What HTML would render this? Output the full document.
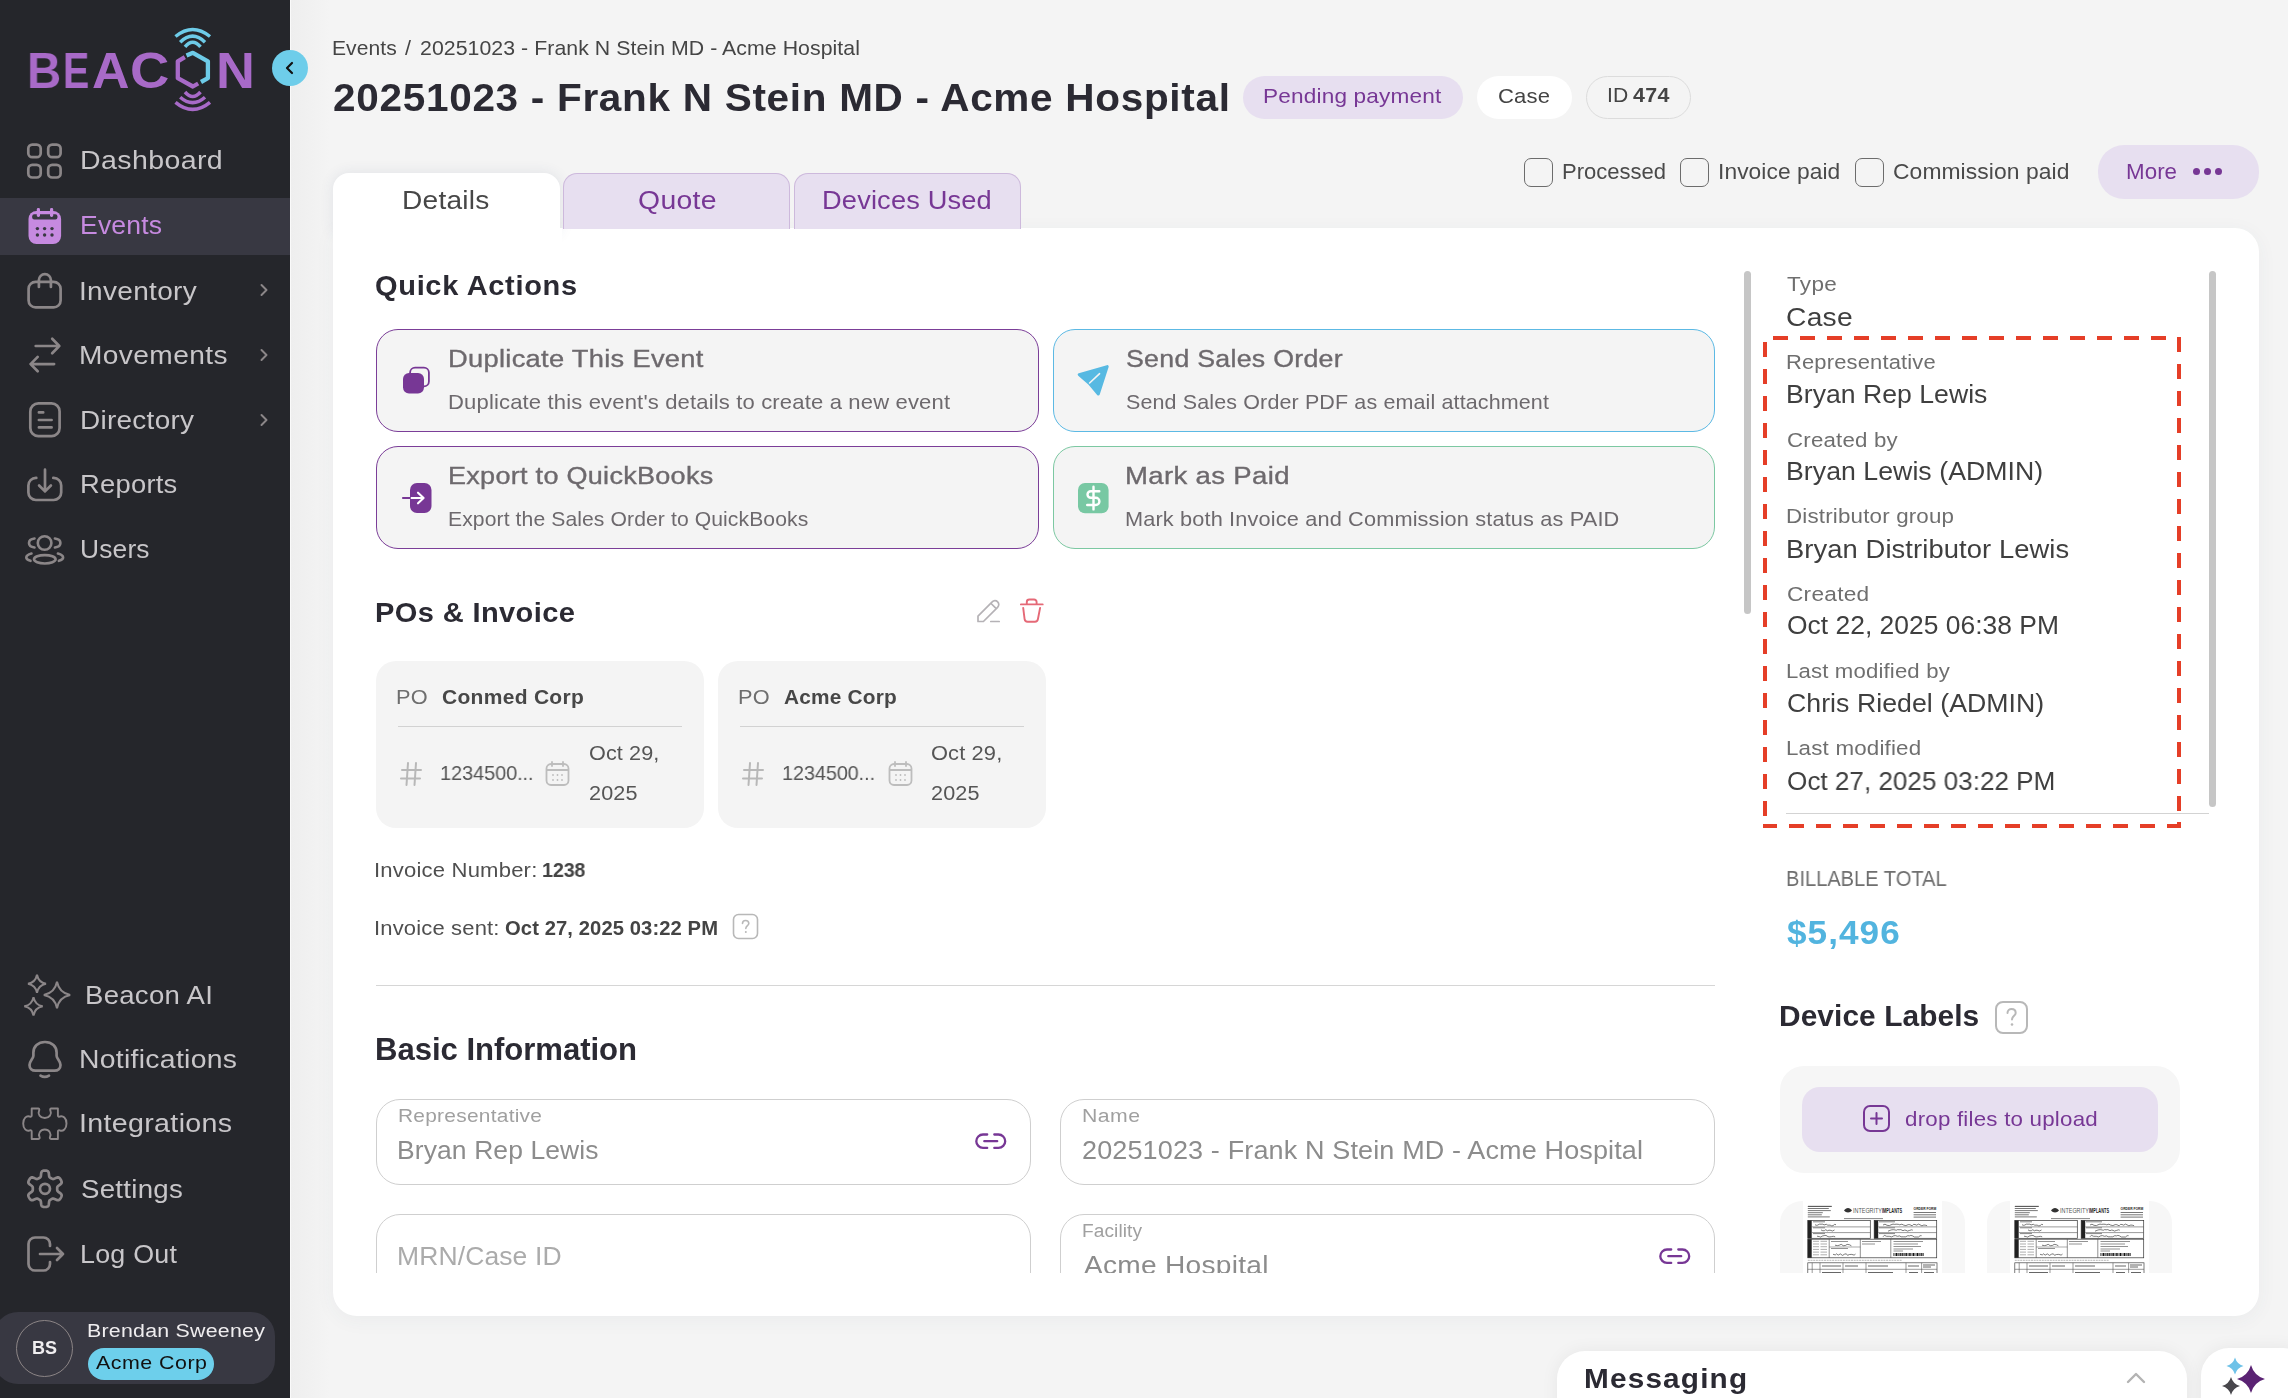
<!DOCTYPE html>
<html><head><meta charset="utf-8"><style>
html,body{margin:0;padding:0;width:2288px;height:1398px;overflow:hidden;background:#f4f4f4;font-family:"Liberation Sans",sans-serif;position:relative}
.t{position:absolute;white-space:nowrap;will-change:transform}
svg{overflow:visible}
</style></head><body>
<div id="root" style="position:absolute;left:0;top:0;width:2288px;height:1398px;overflow:hidden;background:#f4f4f4">
<div style="position:absolute;left:290px;top:0px;width:40px;height:1398px;background:linear-gradient(90deg,#eeeeee,#f4f4f4)"></div>
<div style="position:absolute;left:0px;top:0px;width:290px;height:1398px;background:#25262b"></div>
<div style="position:absolute;left:290px;top:0px;width:1px;height:1398px;background:#fafafa"></div>
<div style="position:absolute;left:0px;top:198px;width:290px;height:57px;background:#383842"></div>
<div class="t" style="left:26.7px;top:46.3px;font-size:50.27px;line-height:50.27px;letter-spacing:0.00px;color:#a86ac8;font-weight:700;transform:scaleX(0.9424);transform-origin:0 0;">B</div>
<div class="t" style="left:62.6px;top:46.3px;font-size:50.27px;line-height:50.27px;letter-spacing:0.00px;color:#a86ac8;font-weight:700;transform:scaleX(0.7851);transform-origin:0 0;">E</div>
<div class="t" style="left:92.1px;top:46.3px;font-size:50.27px;line-height:50.27px;letter-spacing:0.00px;color:#a86ac8;font-weight:700;transform:scaleX(1.0332);transform-origin:0 0;">A</div>
<div class="t" style="left:130.3px;top:46.3px;font-size:50.27px;line-height:50.27px;letter-spacing:0.00px;color:#a86ac8;font-weight:700;transform:scaleX(1.0842);transform-origin:0 0;">C</div>
<div class="t" style="left:215.5px;top:46.3px;font-size:50.27px;line-height:50.27px;letter-spacing:0.00px;color:#a86ac8;font-weight:700;transform:scaleX(1.0722);transform-origin:0 0;">N</div>
<svg style="position:absolute;left:165px;top:24px;" width="55" height="92" viewBox="0 0 55 92" fill="none">
      <path d="M21.5 31.5 L27.9 28.8 L42.9 37.3 L42.9 54.2 L36 58" stroke="#6dcbe8" stroke-width="4.3" stroke-linejoin="round"/>
      <path d="M19.8 33.2 L12.8 37.3 L12.8 54.2 L27.9 62.5 L33.2 59.5" stroke="#a86ac8" stroke-width="4.3" stroke-linejoin="round"/>
      <path d="M10.5 12.5 Q27.6 -1.5 45 12.5" stroke="#6dcbe8" stroke-width="3.5"/>
      <path d="M15.2 18.2 Q27.6 6 40 18.2" stroke="#6dcbe8" stroke-width="3.5"/>
      <path d="M20 22.8 Q27.6 13.6 35.5 22.8" stroke="#6dcbe8" stroke-width="3.5"/>
      <path d="M20 68 Q27.6 77 35.5 68" stroke="#a86ac8" stroke-width="3.5"/>
      <path d="M15.2 73.2 Q27.6 84 40 73.2" stroke="#a86ac8" stroke-width="3.5"/>
      <path d="M10.5 78.3 Q27.6 92.5 45 78.3" stroke="#a86ac8" stroke-width="3.5"/>
    </svg>
<div style="position:absolute;left:272px;top:50px;width:36px;height:36px;border-radius:50%;background:#6ecdea"></div>
<svg style="position:absolute;left:281px;top:59px;" width="18" height="18" viewBox="0 0 18 18" fill="none"><path d="M11 4 L6 9 L11 14" stroke="#111" stroke-width="2.2" stroke-linecap="round" stroke-linejoin="round"/></svg>
<div class="t" style="left:79.7px;top:147.9px;font-size:24.86px;line-height:24.86px;letter-spacing:0.36px;color:#c8c6c9;transform:scaleX(1.1460);transform-origin:0 0;">Dashboard</div>
<div class="t" style="left:79.9px;top:213.2px;font-size:24.86px;line-height:24.86px;letter-spacing:0.17px;color:#c68ae0;transform:scaleX(1.0682);transform-origin:0 0;">Events</div>
<div class="t" style="left:79.2px;top:278.6px;font-size:24.86px;line-height:24.86px;letter-spacing:0.27px;color:#c8c6c9;transform:scaleX(1.1274);transform-origin:0 0;">Inventory</div>
<div class="t" style="left:79.4px;top:343.4px;font-size:24.86px;line-height:24.86px;letter-spacing:0.35px;color:#c8c6c9;transform:scaleX(1.1311);transform-origin:0 0;">Movements</div>
<div class="t" style="left:79.5px;top:408.0px;font-size:24.86px;line-height:24.86px;letter-spacing:0.25px;color:#c8c6c9;transform:scaleX(1.1240);transform-origin:0 0;">Directory</div>
<div class="t" style="left:79.5px;top:472.1px;font-size:24.86px;line-height:24.86px;letter-spacing:0.24px;color:#c8c6c9;transform:scaleX(1.0995);transform-origin:0 0;">Reports</div>
<div class="t" style="left:79.7px;top:536.6px;font-size:24.86px;line-height:24.86px;letter-spacing:0.16px;color:#c8c6c9;transform:scaleX(1.0604);transform-origin:0 0;">Users</div>
<div class="t" style="left:84.8px;top:982.8px;font-size:24.86px;line-height:24.86px;letter-spacing:0.25px;color:#c8c6c9;transform:scaleX(1.1079);transform-origin:0 0;">Beacon AI</div>
<div class="t" style="left:79.4px;top:1046.6px;font-size:24.86px;line-height:24.86px;letter-spacing:0.26px;color:#c8c6c9;transform:scaleX(1.1405);transform-origin:0 0;">Notifications</div>
<div class="t" style="left:79.1px;top:1111.4px;font-size:24.86px;line-height:24.86px;letter-spacing:0.29px;color:#c8c6c9;transform:scaleX(1.1502);transform-origin:0 0;">Integrations</div>
<div class="t" style="left:80.5px;top:1176.6px;font-size:24.86px;line-height:24.86px;letter-spacing:0.24px;color:#c8c6c9;transform:scaleX(1.1121);transform-origin:0 0;">Settings</div>
<div class="t" style="left:79.6px;top:1241.9px;font-size:24.86px;line-height:24.86px;letter-spacing:0.20px;color:#c8c6c9;transform:scaleX(1.0804);transform-origin:0 0;">Log Out</div>
<svg style="position:absolute;left:25px;top:141px;" width="40" height="40" viewBox="0 0 40 40" fill="none"><rect x="3.3" y="3.6" width="12.4" height="12.6" rx="4" stroke="#8b8688" stroke-width="2.7" stroke-linecap="round" stroke-linejoin="round"/><rect x="23.2" y="3.6" width="12.4" height="12.6" rx="4" stroke="#8b8688" stroke-width="2.7" stroke-linecap="round" stroke-linejoin="round"/><rect x="3.3" y="23.9" width="12.4" height="12.6" rx="4" stroke="#8b8688" stroke-width="2.7" stroke-linecap="round" stroke-linejoin="round"/><rect x="23.2" y="23.9" width="12.4" height="12.6" rx="4" stroke="#8b8688" stroke-width="2.7" stroke-linecap="round" stroke-linejoin="round"/></svg>
<svg style="position:absolute;left:25px;top:205px;" width="40" height="42" viewBox="0 0 40 42" fill="none"><rect x="3.5" y="6" width="32.6" height="33" rx="8" fill="#c68ae0"/><rect x="7.2" y="9.2" width="25.2" height="5.4" rx="2" fill="#383842"/><rect x="11.8" y="3" width="3.2" height="9" rx="1.4" fill="#c68ae0"/><rect x="25" y="3" width="3.2" height="9" rx="1.4" fill="#c68ae0"/><circle cx="12.4" cy="23.6" r="1.7" fill="#383842"/><circle cx="12.4" cy="30" r="1.7" fill="#383842"/><circle cx="19.6" cy="23.6" r="1.7" fill="#383842"/><circle cx="19.6" cy="30" r="1.7" fill="#383842"/><circle cx="27" cy="23.6" r="1.7" fill="#383842"/><circle cx="27" cy="30" r="1.7" fill="#383842"/></svg>
<svg style="position:absolute;left:25px;top:270px;" width="40" height="42" viewBox="0 0 40 42" fill="none"><rect x="3.6" y="11.8" width="32" height="25.6" rx="7" stroke="#8b8688" stroke-width="2.7" stroke-linecap="round" stroke-linejoin="round"/><path d="M13.9 17 V10.1 a6 6 0 0 1 12 0 V17" stroke="#8b8688" stroke-width="2.7" stroke-linecap="round" stroke-linejoin="round"/></svg>
<svg style="position:absolute;left:25px;top:335px;" width="40" height="42" viewBox="0 0 40 42" fill="none"><path d="M10.7 11 H34.3 M27.2 3.8 L34.3 11 L27.2 18.2" stroke="#8b8688" stroke-width="2.7" stroke-linecap="round" stroke-linejoin="round"/><path d="M29.1 29.1 H5.6 M12.7 21.9 L5.6 29.1 L12.7 36.3" stroke="#8b8688" stroke-width="2.7" stroke-linecap="round" stroke-linejoin="round"/></svg>
<svg style="position:absolute;left:25px;top:400px;" width="40" height="42" viewBox="0 0 40 42" fill="none"><rect x="5.3" y="3.4" width="29.3" height="32.7" rx="8" stroke="#8b8688" stroke-width="2.7" stroke-linecap="round" stroke-linejoin="round"/><path d="M13.9 12.4 H18.2 M13.9 20 H26.6 M13.9 27.4 H26.6" stroke="#8b8688" stroke-width="2.7" stroke-linecap="round" stroke-linejoin="round"/></svg>
<svg style="position:absolute;left:25px;top:465px;" width="40" height="40" viewBox="0 0 40 40" fill="none"><path d="M11.3 12.9 H10.9 a7.5 7.5 0 0 0 -7.5 7.5 V27.5 a7.5 7.5 0 0 0 7.5 7.5 H28.7 a7.5 7.5 0 0 0 7.5 -7.5 V20.4 a7.5 7.5 0 0 0 -7.5 -7.5 H28.3" stroke="#8b8688" stroke-width="2.7" stroke-linecap="round" stroke-linejoin="round"/><path d="M20 4.7 V26.4 M14.1 20.5 L20 26.4 L25.9 20.5" stroke="#8b8688" stroke-width="2.7" stroke-linecap="round" stroke-linejoin="round"/></svg>
<svg style="position:absolute;left:23px;top:532px;" width="44" height="36" viewBox="0 0 44 36" fill="none"><circle cx="21.6" cy="11" r="6.8" stroke="#8b8688" stroke-width="2.6" stroke-linecap="round"/><ellipse cx="21.8" cy="27.3" rx="10.8" ry="4.2" stroke="#8b8688" stroke-width="2.6" stroke-linecap="round"/><path d="M11.5 6.5 C7.5 7 6 9 6 11 C6 13 7.5 15 11.5 15.5" stroke="#8b8688" stroke-width="2.6" stroke-linecap="round"/><path d="M31.9 6.5 C35.9 7 37.4 9 37.4 11 C37.4 13 35.9 15 31.9 15.5" stroke="#8b8688" stroke-width="2.6" stroke-linecap="round"/><path d="M8.5 21.5 C4.8 22.5 3.3 24 3.3 25.5 C3.3 27 4.5 28 7.5 28.8" stroke="#8b8688" stroke-width="2.6" stroke-linecap="round"/><path d="M34.9 21.5 C38.6 22.5 40.1 24 40.1 25.5 C40.1 27 38.9 28 35.9 28.8" stroke="#8b8688" stroke-width="2.6" stroke-linecap="round"/></svg>
<svg style="position:absolute;left:256px;top:282px;" width="16" height="16" viewBox="0 0 16 16" fill="none"><path d="M5.5 3 L10.5 8 L5.5 13" stroke="#8b8688" stroke-width="2" stroke-linecap="round" stroke-linejoin="round"/></svg>
<svg style="position:absolute;left:256px;top:347px;" width="16" height="16" viewBox="0 0 16 16" fill="none"><path d="M5.5 3 L10.5 8 L5.5 13" stroke="#8b8688" stroke-width="2" stroke-linecap="round" stroke-linejoin="round"/></svg>
<svg style="position:absolute;left:256px;top:412px;" width="16" height="16" viewBox="0 0 16 16" fill="none"><path d="M5.5 3 L10.5 8 L5.5 13" stroke="#8b8688" stroke-width="2" stroke-linecap="round" stroke-linejoin="round"/></svg>
<svg style="position:absolute;left:21px;top:972px;" width="52" height="48" viewBox="0 0 52 48" fill="none"><path d="M16 2.8000000000000007 Q17.44 10.360000000000001 25 11.8 Q17.44 13.24 16 20.8 Q14.56 13.24 7 11.8 Q14.56 10.360000000000001 16 2.8000000000000007 Z" stroke="#8b8688" stroke-width="2" stroke-linejoin="miter"/><path d="M36 9.8 Q38.112 20.887999999999998 49.2 23 Q38.112 25.112000000000002 36 36.2 Q33.888 25.112000000000002 22.8 23 Q33.888 20.887999999999998 36 9.8 Z" stroke="#8b8688" stroke-width="2" stroke-linejoin="miter"/><path d="M12.5 25.099999999999998 Q13.972 32.827999999999996 21.7 34.3 Q13.972 35.772 12.5 43.5 Q11.028 35.772 3.3000000000000007 34.3 Q11.028 32.827999999999996 12.5 25.099999999999998 Z" stroke="#8b8688" stroke-width="2" stroke-linejoin="miter"/></svg>
<svg style="position:absolute;left:25px;top:1038px;" width="40" height="44" viewBox="0 0 40 44" fill="none"><path d="M20 4 C27 4 31.6 8.5 31.6 14.5 V17.8 C31.6 20.5 35.5 23 35.5 27 C35.5 30.5 33 32.7 29.5 32.7 H10.5 C7 32.7 4.5 30.5 4.5 27 C4.5 23 8.4 20.5 8.4 17.8 V14.5 C8.4 8.5 13 4 20 4 Z" stroke="#8b8688" stroke-width="2.7" stroke-linecap="round" stroke-linejoin="round"/><path d="M15.5 37.6 Q19.7 40.2 24 37.6" stroke="#8b8688" stroke-width="2.7" stroke-linecap="round" stroke-linejoin="round"/></svg>
<svg style="position:absolute;left:21px;top:1106px;" width="48" height="36" viewBox="0 0 48 36" fill="none"><path d="M10.7 2.5 H17.5 C18.5 2.5 18.5 4 18 5 C16.5 8 19 12 23.8 12 C28.5 12 31 8 29.5 5 C29 4 29 2.5 30 2.5 H36.9 V9.5 C36.9 10.5 38 11 39 10.5 C42 9.5 45.5 12 45.5 17.5 C45.5 23 42 25.5 39 24.5 C38 24 36.9 24.5 36.9 25.5 V33 H30 C29 33 28.5 32 29 31 C30.5 28 28.5 23.5 23.8 23.5 C19 23.5 17 28 18.5 31 C19 32 18.5 33 17.5 33 H10.7 V25.5 C10.7 24.5 9.5 24 8.5 24.5 C5.5 25.5 2.2 23 2.2 17.5 C2.2 12 5.5 9.5 8.5 10.5 C9.5 11 10.7 10.5 10.7 9.5 Z" stroke="#8b8688" stroke-width="1.9" stroke-linejoin="round"/></svg>
<svg style="position:absolute;left:25px;top:1168px;" width="40" height="42" viewBox="0 0 40 42" fill="none"><path d="M20.00 2.60 L20.63 2.62 L21.27 2.68 L21.89 2.79 L22.50 3.01 L23.07 3.41 L23.54 4.15 L23.85 5.38 L24.00 6.86 L24.14 8.07 L24.36 8.83 L24.66 9.27 L25.00 9.57 L25.36 9.80 L25.73 10.02 L26.10 10.23 L26.47 10.45 L26.84 10.66 L27.23 10.85 L27.65 11.00 L28.19 11.04 L28.95 10.86 L30.08 10.37 L31.43 9.76 L32.65 9.41 L33.53 9.45 L34.16 9.74 L34.65 10.16 L35.06 10.64 L35.43 11.16 L35.76 11.70 L36.06 12.26 L36.33 12.84 L36.54 13.44 L36.66 14.07 L36.60 14.76 L36.19 15.54 L35.28 16.42 L34.07 17.29 L33.09 18.02 L32.55 18.59 L32.31 19.07 L32.23 19.51 L32.20 19.95 L32.20 20.37 L32.20 20.80 L32.20 21.23 L32.20 21.65 L32.23 22.09 L32.31 22.53 L32.55 23.01 L33.09 23.58 L34.07 24.31 L35.28 25.18 L36.19 26.06 L36.60 26.84 L36.66 27.53 L36.54 28.16 L36.33 28.76 L36.06 29.34 L35.76 29.90 L35.43 30.44 L35.06 30.96 L34.65 31.44 L34.16 31.86 L33.53 32.15 L32.65 32.19 L31.43 31.84 L30.08 31.23 L28.95 30.74 L28.19 30.56 L27.65 30.60 L27.23 30.75 L26.84 30.94 L26.47 31.15 L26.10 31.37 L25.73 31.58 L25.36 31.80 L25.00 32.03 L24.66 32.33 L24.36 32.77 L24.14 33.53 L24.00 34.74 L23.85 36.22 L23.54 37.45 L23.07 38.19 L22.50 38.59 L21.89 38.81 L21.27 38.92 L20.63 38.98 L20.00 39.00 L19.37 38.98 L18.73 38.92 L18.11 38.81 L17.50 38.59 L16.93 38.19 L16.46 37.45 L16.15 36.22 L16.00 34.74 L15.86 33.53 L15.64 32.77 L15.34 32.33 L15.00 32.03 L14.64 31.80 L14.27 31.58 L13.90 31.37 L13.53 31.15 L13.16 30.94 L12.77 30.75 L12.35 30.60 L11.81 30.56 L11.05 30.74 L9.92 31.23 L8.57 31.84 L7.35 32.19 L6.47 32.15 L5.84 31.86 L5.35 31.44 L4.94 30.96 L4.57 30.44 L4.24 29.90 L3.94 29.34 L3.67 28.76 L3.46 28.16 L3.34 27.53 L3.40 26.84 L3.81 26.06 L4.72 25.18 L5.93 24.31 L6.91 23.58 L7.45 23.01 L7.69 22.53 L7.77 22.09 L7.80 21.65 L7.80 21.23 L7.80 20.80 L7.80 20.37 L7.80 19.95 L7.77 19.51 L7.69 19.07 L7.45 18.59 L6.91 18.02 L5.93 17.29 L4.72 16.42 L3.81 15.54 L3.40 14.76 L3.34 14.07 L3.46 13.44 L3.67 12.84 L3.94 12.26 L4.24 11.70 L4.57 11.16 L4.94 10.64 L5.35 10.16 L5.84 9.74 L6.47 9.45 L7.35 9.41 L8.57 9.76 L9.92 10.37 L11.05 10.86 L11.81 11.04 L12.35 11.00 L12.77 10.85 L13.16 10.66 L13.53 10.45 L13.90 10.23 L14.27 10.02 L14.64 9.80 L15.00 9.57 L15.34 9.27 L15.64 8.83 L15.86 8.07 L16.00 6.86 L16.15 5.38 L16.46 4.15 L16.93 3.41 L17.50 3.01 L18.11 2.79 L18.73 2.68 L19.37 2.62 L20.00 2.60Z" stroke="#8b8688" stroke-width="2.7" stroke-linecap="round" stroke-linejoin="round"/><circle cx="20" cy="20.8" r="5" stroke="#8b8688" stroke-width="2.7" stroke-linecap="round" stroke-linejoin="round"/></svg>
<svg style="position:absolute;left:25px;top:1234px;" width="42" height="40" viewBox="0 0 42 40" fill="none"><path d="M25 12 V10 a6.5 6.5 0 0 0 -6.5 -6.5 H10 a6.5 6.5 0 0 0 -6.5 6.5 V30 a6.5 6.5 0 0 0 6.5 6.5 H18.5 a6.5 6.5 0 0 0 6.5 -6.5 V28" stroke="#8b8688" stroke-width="2.7" stroke-linecap="round" stroke-linejoin="round"/><path d="M15 20 H38 M32 14 L38 20 L32 26" stroke="#8b8688" stroke-width="2.7" stroke-linecap="round" stroke-linejoin="round"/></svg>
<div style="position:absolute;left:-6px;top:1312px;width:281px;height:72px;border-radius:24px;background:#383842"></div>
<div style="position:absolute;left:15.5px;top:1319.5px;width:57px;height:57px;border-radius:50%;border:1px solid #8c8586;box-sizing:border-box"></div>
<div class="t" style="left:32.0px;top:1340.1px;font-size:17.97px;line-height:17.97px;letter-spacing:0.05px;color:#f0eef0;font-weight:700;transform:scaleX(1.0023);transform-origin:0 0;">BS</div>
<div class="t" style="left:87.0px;top:1321.3px;font-size:19.19px;line-height:19.19px;letter-spacing:0.21px;color:#efedef;transform:scaleX(1.1137);transform-origin:0 0;">Brendan Sweeney</div>
<div style="position:absolute;left:88px;top:1348px;width:126px;height:32px;border-radius:16px;background:#6dcfeb"></div>
<div class="t" style="left:96.2px;top:1355.0px;font-size:17.43px;line-height:17.43px;letter-spacing:0.40px;color:#111;transform:scaleX(1.2281);transform-origin:0 0;">Acme Corp</div>
<div class="t" style="left:331.5px;top:37.7px;font-size:20.54px;line-height:20.54px;letter-spacing:0.06px;color:#454545;transform:scaleX(1.0268);transform-origin:0 0;">Events</div>
<div class="t" style="left:405.0px;top:37.7px;font-size:20.54px;line-height:20.54px;letter-spacing:0.00px;color:#454545;transform:scaleX(1.0526);transform-origin:0 0;">/</div>
<div class="t" style="left:419.8px;top:37.7px;font-size:20.54px;line-height:20.54px;letter-spacing:0.06px;color:#454545;transform:scaleX(1.0358);transform-origin:0 0;">20251023 - Frank N Stein MD - Acme Hospital</div>
<div class="t" style="left:332.6px;top:77.6px;font-size:39.19px;line-height:39.19px;letter-spacing:0.68px;color:#2b2a33;font-weight:700;transform:scaleX(1.0341);transform-origin:0 0;">20251023 - Frank N Stein MD - Acme Hospital</div>
<div style="position:absolute;left:1243px;top:76px;width:220px;height:43px;border-radius:22px;background:#e7dff0"></div>
<div class="t" style="left:1262.9px;top:86.0px;font-size:20.95px;line-height:20.95px;letter-spacing:0.16px;color:#773795;transform:scaleX(1.0792);transform-origin:0 0;">Pending payment</div>
<div style="position:absolute;left:1477px;top:76px;width:95px;height:43px;border-radius:22px;background:#fff"></div>
<div class="t" style="left:1498.2px;top:86.0px;font-size:20.95px;line-height:20.95px;letter-spacing:0.15px;color:#444;transform:scaleX(1.0538);transform-origin:0 0;">Case</div>
<div style="position:absolute;left:1586px;top:76px;width:105px;height:43px;border-radius:22px;border:1px solid #dcdcdc;box-sizing:border-box"></div>
<div class="t" style="left:1606.8px;top:85.0px;font-size:20.95px;line-height:20.95px;letter-spacing:0.03px;color:#444;transform:scaleX(1.0085);transform-origin:0 0;">ID</div>
<div class="t" style="left:1633.0px;top:85.0px;font-size:20.95px;line-height:20.95px;letter-spacing:0.38px;color:#444;font-weight:700;transform:scaleX(1.0222);transform-origin:0 0;">474</div>
<div style="position:absolute;left:1524px;top:158px;width:29px;height:29px;border-radius:7px;border:1.2px solid #6c6c6c;box-sizing:border-box"></div>
<div class="t" style="left:1561.9px;top:161.4px;font-size:22.03px;line-height:22.03px;letter-spacing:0.00px;color:#4a4a4a;transform:scaleX(1.0001);transform-origin:0 0;">Processed</div>
<div style="position:absolute;left:1680px;top:158px;width:29px;height:29px;border-radius:7px;border:1.2px solid #6c6c6c;box-sizing:border-box"></div>
<div class="t" style="left:1718.3px;top:161.4px;font-size:22.03px;line-height:22.03px;letter-spacing:0.06px;color:#4a4a4a;transform:scaleX(1.0349);transform-origin:0 0;">Invoice paid</div>
<div style="position:absolute;left:1855px;top:158px;width:29px;height:29px;border-radius:7px;border:1.2px solid #6c6c6c;box-sizing:border-box"></div>
<div class="t" style="left:1893.2px;top:161.4px;font-size:22.03px;line-height:22.03px;letter-spacing:0.08px;color:#4a4a4a;transform:scaleX(1.0381);transform-origin:0 0;">Commission paid</div>
<div style="position:absolute;left:2098px;top:145px;width:161px;height:54px;border-radius:26px;background:#e7dff0"></div>
<div class="t" style="left:2125.6px;top:161.4px;font-size:22.03px;line-height:22.03px;letter-spacing:0.04px;color:#773795;transform:scaleX(1.0151);transform-origin:0 0;">More</div>
<div style="position:absolute;left:2192.7px;top:167.5px;width:7.6px;height:7.6px;border-radius:50%;background:#773795"></div>
<div style="position:absolute;left:2203.7px;top:167.5px;width:7.6px;height:7.6px;border-radius:50%;background:#773795"></div>
<div style="position:absolute;left:2214.7px;top:167.5px;width:7.6px;height:7.6px;border-radius:50%;background:#773795"></div>
<div style="position:absolute;left:333px;top:228px;width:1926px;height:1088px;border-radius:0 24px 24px 24px;background:#fff;box-shadow:0 4px 20px rgba(60,70,90,0.05)"></div>
<div style="position:absolute;left:333px;top:173px;width:227px;height:60px;border-radius:16px 16px 0 0;background:#fff;box-shadow:0 0 14px rgba(50,70,110,0.10)"></div>
<div style="position:absolute;left:333px;top:228px;width:229px;height:34px;background:#fff"></div>
<div class="t" style="left:402.1px;top:187.9px;font-size:25.68px;line-height:25.68px;letter-spacing:0.20px;color:#474747;transform:scaleX(1.0951);transform-origin:0 0;">Details</div>
<div style="position:absolute;left:563px;top:173px;width:227px;height:56px;border-radius:14px 14px 0 0;background:#e7dff0;border:1px solid #cdb9dc;border-bottom:none;box-sizing:border-box"></div>
<div class="t" style="left:637.5px;top:187.9px;font-size:25.68px;line-height:25.68px;letter-spacing:0.30px;color:#773795;transform:scaleX(1.1051);transform-origin:0 0;">Quote</div>
<div style="position:absolute;left:794px;top:173px;width:227px;height:56px;border-radius:14px 14px 0 0;background:#e7dff0;border:1px solid #cdb9dc;border-bottom:none;box-sizing:border-box"></div>
<div class="t" style="left:822.2px;top:187.9px;font-size:25.68px;line-height:25.68px;letter-spacing:0.15px;color:#773795;transform:scaleX(1.0607);transform-origin:0 0;">Devices Used</div>
<div class="t" style="left:375.4px;top:272.1px;font-size:27.84px;line-height:27.84px;letter-spacing:0.65px;color:#2b2a33;font-weight:700;transform:scaleX(1.0422);transform-origin:0 0;">Quick Actions</div>
<div style="position:absolute;left:376px;top:329px;width:663px;height:103px;border-radius:22px;background:#f4f4f4;border:1.5px solid #7b3e98;box-sizing:border-box"></div>
<div class="t" style="left:447.8px;top:346.5px;font-size:24.05px;line-height:24.05px;letter-spacing:0.26px;color:#6d696d;transform:scaleX(1.1347);transform-origin:0 0;-webkit-text-stroke:0.35px #6d696d;">Duplicate This Event</div>
<div class="t" style="left:448.2px;top:392.4px;font-size:20.14px;line-height:20.14px;letter-spacing:0.14px;color:#6d696d;transform:scaleX(1.0950);transform-origin:0 0;">Duplicate this event&#x27;s details to create a new event</div>
<div style="position:absolute;left:1053px;top:329px;width:662px;height:103px;border-radius:22px;background:#f4f4f4;border:1.5px solid #5cb9e4;box-sizing:border-box"></div>
<div class="t" style="left:1125.8px;top:346.5px;font-size:24.05px;line-height:24.05px;letter-spacing:0.24px;color:#6d696d;transform:scaleX(1.1125);transform-origin:0 0;-webkit-text-stroke:0.35px #6d696d;">Send Sales Order</div>
<div class="t" style="left:1126.0px;top:392.4px;font-size:20.14px;line-height:20.14px;letter-spacing:0.12px;color:#6d696d;transform:scaleX(1.0675);transform-origin:0 0;">Send Sales Order PDF as email attachment</div>
<div style="position:absolute;left:376px;top:446px;width:663px;height:103px;border-radius:22px;background:#f4f4f4;border:1.5px solid #7b3e98;box-sizing:border-box"></div>
<div class="t" style="left:447.8px;top:463.5px;font-size:24.05px;line-height:24.05px;letter-spacing:0.25px;color:#6d696d;transform:scaleX(1.1240);transform-origin:0 0;-webkit-text-stroke:0.35px #6d696d;">Export to QuickBooks</div>
<div class="t" style="left:448.3px;top:509.4px;font-size:20.14px;line-height:20.14px;letter-spacing:0.08px;color:#6d696d;transform:scaleX(1.0509);transform-origin:0 0;">Export the Sales Order to QuickBooks</div>
<div style="position:absolute;left:1053px;top:446px;width:662px;height:103px;border-radius:22px;background:#f4f4f4;border:1.5px solid #7cc8a2;box-sizing:border-box"></div>
<div class="t" style="left:1124.8px;top:463.5px;font-size:24.05px;line-height:24.05px;letter-spacing:0.30px;color:#6d696d;transform:scaleX(1.1456);transform-origin:0 0;-webkit-text-stroke:0.35px #6d696d;">Mark as Paid</div>
<div class="t" style="left:1125.3px;top:509.4px;font-size:20.14px;line-height:20.14px;letter-spacing:0.13px;color:#6d696d;transform:scaleX(1.0804);transform-origin:0 0;">Mark both Invoice and Commission status as PAID</div>
<svg style="position:absolute;left:400px;top:364px;" width="34" height="34" viewBox="0 0 34 34" fill="none"><rect x="10.1" y="3.6" width="18.8" height="18.8" rx="5" stroke="#773795" stroke-width="1.8"/><rect x="3" y="8.9" width="21" height="20.7" rx="6" fill="#773795"/></svg>
<svg style="position:absolute;left:400px;top:480px;" width="34" height="36" viewBox="0 0 34 36" fill="none"><rect x="10" y="2.9" width="21.5" height="30.1" rx="7" fill="#773795"/><path d="M10 18 H23.6 M18 12.7 L23.6 18 L18 23.3" stroke="#fff" stroke-width="2.1" stroke-linecap="round" stroke-linejoin="round"/><path d="M3 18 H10" stroke="#773795" stroke-width="2.1" stroke-linecap="round"/></svg>
<svg style="position:absolute;left:1076px;top:363px;" width="36" height="36" viewBox="0 0 36 36" fill="none"><path d="M3.2 11.6 L31.2 3.6 L22.3 31 L13.3 20.3 Z" fill="#57b9e2" stroke="#57b9e2" stroke-width="3" stroke-linejoin="round"/><path d="M13.6 20 L23.6 10.7" stroke="#f4f4f4" stroke-width="1.6" stroke-linecap="round"/></svg>
<svg style="position:absolute;left:1077px;top:482px;" width="34" height="34" viewBox="0 0 34 34" fill="none"><rect x="1" y="1" width="30.6" height="30.2" rx="7" fill="#78c8a3"/><path d="M22.3 9.2 H13.8 a3.3 3.3 0 0 0 0 6.6 H18.8 a3.6 3.6 0 0 1 0 7.2 H10.2 M16.5 4.7 V27.4" stroke="#fff" stroke-width="2.4" stroke-linecap="round"/></svg>
<div style="position:absolute;left:1744px;top:271px;width:7px;height:343px;border-radius:4px;background:#c6c6c6"></div>
<div style="position:absolute;left:2209px;top:271px;width:7px;height:536px;border-radius:4px;background:#c6c6c6"></div>
<div class="t" style="left:374.5px;top:598.3px;font-size:28.38px;line-height:28.38px;letter-spacing:0.37px;color:#2b2a33;font-weight:700;transform:scaleX(1.0234);transform-origin:0 0;">POs &amp; Invoice</div>
<svg style="position:absolute;left:972px;top:596px;" width="32" height="32" viewBox="0 0 32 32" fill="none"><path d="M6.00 25.50 H11.40 L25.58 11.32 A3.82 3.82 0 1 0 20.18 5.92 L6.00 20.10 Z M18.83 7.27 L24.23 12.67 M18.8 25.5 H27.2" stroke="#b5b2b6" stroke-width="1.7" stroke-linecap="round" stroke-linejoin="round"/></svg>
<svg style="position:absolute;left:1016px;top:596px;" width="30" height="30" viewBox="0 0 30 30" fill="none"><path d="M4.9 8.4 H26.7 M10.8 8.4 V6 a2.5 2.5 0 0 1 2.5 -2.5 H18.1 a2.5 2.5 0 0 1 2.5 2.5 V8.4 M7.2 11.9 L8.6 23.2 a3 3 0 0 0 3 2.6 H18.9 a3 3 0 0 0 3 -2.6 L24.1 11.9" stroke="#e56977" stroke-width="1.9" stroke-linecap="round" stroke-linejoin="round"/></svg>
<div style="position:absolute;left:376px;top:661px;width:328px;height:167px;border-radius:20px;background:#f4f4f4"></div>
<div class="t" style="left:396.1px;top:687.4px;font-size:20.54px;line-height:20.54px;letter-spacing:0.28px;color:#6e6e6e;transform:scaleX(1.0591);transform-origin:0 0;">PO</div>
<div class="t" style="left:441.6px;top:687.4px;font-size:20.54px;line-height:20.54px;letter-spacing:0.30px;color:#474747;font-weight:700;transform:scaleX(1.0220);transform-origin:0 0;">Conmed Corp</div>
<div style="position:absolute;left:398px;top:726px;width:284px;height:1px;background:#d2d2d2"></div>
<svg style="position:absolute;left:399px;top:760px;" width="24" height="28" viewBox="0 0 24 28" fill="none"><path d="M9 3 L7.5 25 M17 3 L15.5 25 M3 10 H22 M2 18.5 H21" stroke="#b8b8b8" stroke-width="2" stroke-linecap="round"/></svg>
<div class="t" style="left:439.7px;top:762.5px;font-size:20.81px;line-height:20.81px;letter-spacing:-0.08px;color:#555;transform:scaleX(0.9587);transform-origin:0 0;">1234500...</div>
<svg style="position:absolute;left:544px;top:760px;" width="28" height="28" viewBox="0 0 28 28" fill="none"><rect x="2.5" y="4" width="22" height="21" rx="4.5" stroke="#bdbdbd" stroke-width="1.8"/><path d="M8 2 V6 M19 2 V6 M3 10 H24" stroke="#bdbdbd" stroke-width="1.8" stroke-linecap="round"/><circle cx="9" cy="15" r="0.9" fill="#bdbdbd"/><circle cx="9" cy="20" r="0.9" fill="#bdbdbd"/><circle cx="13.5" cy="15" r="0.9" fill="#bdbdbd"/><circle cx="13.5" cy="20" r="0.9" fill="#bdbdbd"/><circle cx="18" cy="15" r="0.9" fill="#bdbdbd"/><circle cx="18" cy="20" r="0.9" fill="#bdbdbd"/></svg>
<div class="t" style="left:589.3px;top:743.2px;font-size:20.54px;line-height:20.54px;letter-spacing:0.10px;color:#555;transform:scaleX(1.0524);transform-origin:0 0;">Oct 29,</div>
<div class="t" style="left:589.2px;top:782.5px;font-size:20.54px;line-height:20.54px;letter-spacing:0.13px;color:#555;transform:scaleX(1.0530);transform-origin:0 0;">2025</div>
<div style="position:absolute;left:718px;top:661px;width:328px;height:167px;border-radius:20px;background:#f4f4f4"></div>
<div class="t" style="left:738.1px;top:687.4px;font-size:20.54px;line-height:20.54px;letter-spacing:0.28px;color:#6e6e6e;transform:scaleX(1.0591);transform-origin:0 0;">PO</div>
<div class="t" style="left:783.9px;top:687.4px;font-size:20.54px;line-height:20.54px;letter-spacing:0.20px;color:#474747;font-weight:700;transform:scaleX(1.0149);transform-origin:0 0;">Acme Corp</div>
<div style="position:absolute;left:740px;top:726px;width:284px;height:1px;background:#d2d2d2"></div>
<svg style="position:absolute;left:741px;top:760px;" width="24" height="28" viewBox="0 0 24 28" fill="none"><path d="M9 3 L7.5 25 M17 3 L15.5 25 M3 10 H22 M2 18.5 H21" stroke="#b8b8b8" stroke-width="2" stroke-linecap="round"/></svg>
<div class="t" style="left:781.7px;top:762.5px;font-size:20.81px;line-height:20.81px;letter-spacing:-0.09px;color:#555;transform:scaleX(0.9542);transform-origin:0 0;">1234500...</div>
<svg style="position:absolute;left:887px;top:760px;" width="28" height="28" viewBox="0 0 28 28" fill="none"><rect x="2.5" y="4" width="22" height="21" rx="4.5" stroke="#bdbdbd" stroke-width="1.8"/><path d="M8 2 V6 M19 2 V6 M3 10 H24" stroke="#bdbdbd" stroke-width="1.8" stroke-linecap="round"/><circle cx="9" cy="15" r="0.9" fill="#bdbdbd"/><circle cx="9" cy="20" r="0.9" fill="#bdbdbd"/><circle cx="13.5" cy="15" r="0.9" fill="#bdbdbd"/><circle cx="13.5" cy="20" r="0.9" fill="#bdbdbd"/><circle cx="18" cy="15" r="0.9" fill="#bdbdbd"/><circle cx="18" cy="20" r="0.9" fill="#bdbdbd"/></svg>
<div class="t" style="left:931.0px;top:743.2px;font-size:20.54px;line-height:20.54px;letter-spacing:0.12px;color:#555;transform:scaleX(1.0643);transform-origin:0 0;">Oct 29,</div>
<div class="t" style="left:930.9px;top:782.5px;font-size:20.54px;line-height:20.54px;letter-spacing:0.13px;color:#555;transform:scaleX(1.0530);transform-origin:0 0;">2025</div>
<div class="t" style="left:374.4px;top:860.4px;font-size:20.00px;line-height:20.00px;letter-spacing:0.18px;color:#4f4f4f;transform:scaleX(1.1021);transform-origin:0 0;">Invoice Number:</div>
<div class="t" style="left:542.1px;top:860.4px;font-size:20.00px;line-height:20.00px;letter-spacing:-0.17px;color:#444;font-weight:700;transform:scaleX(0.9882);transform-origin:0 0;">1238</div>
<div class="t" style="left:374.4px;top:917.6px;font-size:20.00px;line-height:20.00px;letter-spacing:0.15px;color:#4f4f4f;transform:scaleX(1.0993);transform-origin:0 0;">Invoice sent:</div>
<div class="t" style="left:504.9px;top:917.6px;font-size:20.00px;line-height:20.00px;letter-spacing:0.10px;color:#444;font-weight:700;transform:scaleX(1.0094);transform-origin:0 0;">Oct 27, 2025 03:22 PM</div>
<svg style="position:absolute;left:732px;top:913px;" width="28" height="28" viewBox="0 0 28 28" fill="none"><rect x="1.5" y="1.5" width="24" height="24" rx="5" stroke="#b8b8b8" stroke-width="1.6"/><path d="M10.5 10.5 C10.5 8.5 12 7.5 13.5 7.5 C15.5 7.5 16.8 8.8 16.8 10.5 C16.8 12.5 13.8 13 13.8 15.5" stroke="#b8b8b8" stroke-width="1.6" stroke-linecap="round"/><circle cx="13.8" cy="19" r="1" fill="#b8b8b8"/></svg>
<div style="position:absolute;left:376px;top:985px;width:1339px;height:1px;background:#d6d6d6"></div>
<div class="t" style="left:374.8px;top:1034.2px;font-size:31.08px;line-height:31.08px;letter-spacing:-0.03px;color:#2b2a33;font-weight:700;transform:scaleX(0.9981);transform-origin:0 0;">Basic Information</div>
<div style="position:absolute;left:333px;top:1090px;width:1410px;height:183px;overflow:hidden">
<div style="position:absolute;left:43px;top:9px;width:655px;height:86px;border-radius:24px;border:1.2px solid #cfcfcf;box-sizing:border-box;background:#fff"></div>
<div style="position:absolute;left:727px;top:9px;width:655px;height:86px;border-radius:24px;border:1.2px solid #cfcfcf;box-sizing:border-box;background:#fff"></div>
<div style="position:absolute;left:43px;top:124px;width:655px;height:86px;border-radius:24px;border:1.2px solid #cfcfcf;box-sizing:border-box;background:#fff"></div>
<div style="position:absolute;left:727px;top:124px;width:655px;height:86px;border-radius:24px;border:1.2px solid #cfcfcf;box-sizing:border-box;background:#fff"></div>
<div class="t" style="left:64.5px;top:17.4px;font-size:18.24px;line-height:18.24px;letter-spacing:0.23px;color:#a0a0a0;transform:scaleX(1.1457);transform-origin:0 0;">Representative</div>
<div class="t" style="left:64.1px;top:48.0px;font-size:25.41px;line-height:25.41px;letter-spacing:0.10px;color:#8c8c8c;transform:scaleX(1.0419);transform-origin:0 0;">Bryan Rep Lewis</div>
<div class="t" style="left:748.9px;top:17.4px;font-size:18.24px;line-height:18.24px;letter-spacing:0.42px;color:#a0a0a0;transform:scaleX(1.1640);transform-origin:0 0;">Name</div>
<div class="t" style="left:749.3px;top:48.0px;font-size:25.41px;line-height:25.41px;letter-spacing:0.13px;color:#8c8c8c;transform:scaleX(1.0627);transform-origin:0 0;">20251023 - Frank N Stein MD - Acme Hospital</div>
<div class="t" style="left:64.1px;top:154.4px;font-size:25.41px;line-height:25.41px;letter-spacing:0.11px;color:#ababab;transform:scaleX(1.0428);transform-origin:0 0;">MRN/Case ID</div>
<div class="t" style="left:749.1px;top:132.4px;font-size:18.24px;line-height:18.24px;letter-spacing:0.07px;color:#a0a0a0;transform:scaleX(1.0493);transform-origin:0 0;">Facility</div>
<div class="t" style="left:750.5px;top:163.0px;font-size:25.41px;line-height:25.41px;letter-spacing:0.24px;color:#8c8c8c;transform:scaleX(1.1063);transform-origin:0 0;">Acme Hospital</div>
<svg style="position:absolute;left:641px;top:41px;" width="32" height="20" viewBox="0 0 32 20" fill="none"><path d="M13.2 3.5 H9 a6.7 6.7 0 0 0 0 13.4 H13.2 M20.3 3.5 H24.5 a6.7 6.7 0 0 1 0 13.4 H20.3 M10.3 10.2 H23.2" stroke="#773795" stroke-width="2.3" stroke-linecap="round"/></svg>
<svg style="position:absolute;left:1325px;top:156px;" width="32" height="20" viewBox="0 0 32 20" fill="none"><path d="M13.2 3.5 H9 a6.7 6.7 0 0 0 0 13.4 H13.2 M20.3 3.5 H24.5 a6.7 6.7 0 0 1 0 13.4 H20.3 M10.3 10.2 H23.2" stroke="#773795" stroke-width="2.3" stroke-linecap="round"/></svg>
</div>
<div class="t" style="left:1787.3px;top:274.4px;font-size:20.27px;line-height:20.27px;letter-spacing:0.27px;color:#6f6f6f;transform:scaleX(1.1114);transform-origin:0 0;">Type</div>
<div class="t" style="left:1786.4px;top:303.8px;font-size:26.22px;line-height:26.22px;letter-spacing:0.25px;color:#3f3f3f;transform:scaleX(1.0759);transform-origin:0 0;">Case</div>
<div class="t" style="left:1786.0px;top:351.7px;font-size:20.27px;line-height:20.27px;letter-spacing:0.15px;color:#6f6f6f;transform:scaleX(1.0827);transform-origin:0 0;">Representative</div>
<div class="t" style="left:1785.7px;top:381.1px;font-size:26.22px;line-height:26.22px;letter-spacing:0.03px;color:#3f3f3f;transform:scaleX(1.0140);transform-origin:0 0;">Bryan Rep Lewis</div>
<div class="t" style="left:1786.7px;top:429.9px;font-size:20.27px;line-height:20.27px;letter-spacing:0.18px;color:#6f6f6f;transform:scaleX(1.0988);transform-origin:0 0;">Created by</div>
<div class="t" style="left:1785.7px;top:457.5px;font-size:26.22px;line-height:26.22px;letter-spacing:0.04px;color:#3f3f3f;transform:scaleX(1.0175);transform-origin:0 0;">Bryan Lewis (ADMIN)</div>
<div class="t" style="left:1786.0px;top:506.3px;font-size:20.27px;line-height:20.27px;letter-spacing:0.16px;color:#6f6f6f;transform:scaleX(1.1025);transform-origin:0 0;">Distributor group</div>
<div class="t" style="left:1785.6px;top:535.6px;font-size:26.22px;line-height:26.22px;letter-spacing:0.09px;color:#3f3f3f;transform:scaleX(1.0429);transform-origin:0 0;">Bryan Distributor Lewis</div>
<div class="t" style="left:1786.7px;top:583.6px;font-size:20.27px;line-height:20.27px;letter-spacing:0.23px;color:#6f6f6f;transform:scaleX(1.1179);transform-origin:0 0;">Created</div>
<div class="t" style="left:1786.6px;top:612.1px;font-size:26.22px;line-height:26.22px;letter-spacing:0.02px;color:#3f3f3f;transform:scaleX(1.0069);transform-origin:0 0;">Oct 22, 2025 06:38 PM</div>
<div class="t" style="left:1786.0px;top:660.9px;font-size:20.27px;line-height:20.27px;letter-spacing:0.15px;color:#6f6f6f;transform:scaleX(1.0928);transform-origin:0 0;">Last modified by</div>
<div class="t" style="left:1786.5px;top:690.2px;font-size:26.22px;line-height:26.22px;letter-spacing:0.04px;color:#3f3f3f;transform:scaleX(1.0175);transform-origin:0 0;">Chris Riedel (ADMIN)</div>
<div class="t" style="left:1786.0px;top:738.1px;font-size:20.27px;line-height:20.27px;letter-spacing:0.17px;color:#6f6f6f;transform:scaleX(1.1027);transform-origin:0 0;">Last modified</div>
<div class="t" style="left:1786.6px;top:767.5px;font-size:26.22px;line-height:26.22px;letter-spacing:-0.01px;color:#3f3f3f;transform:scaleX(0.9961);transform-origin:0 0;">Oct 27, 2025 03:22 PM</div>
<div style="position:absolute;left:1786px;top:813px;width:423px;height:1px;background:#d3d3d3"></div>
<div style="position:absolute;left:1773px;top:336px;width:15px;height:4px;background:#e53e27"></div>
<div style="position:absolute;left:1800px;top:336px;width:15px;height:4px;background:#e53e27"></div>
<div style="position:absolute;left:1827px;top:336px;width:15px;height:4px;background:#e53e27"></div>
<div style="position:absolute;left:1854px;top:336px;width:15px;height:4px;background:#e53e27"></div>
<div style="position:absolute;left:1881px;top:336px;width:15px;height:4px;background:#e53e27"></div>
<div style="position:absolute;left:1908px;top:336px;width:15px;height:4px;background:#e53e27"></div>
<div style="position:absolute;left:1935px;top:336px;width:15px;height:4px;background:#e53e27"></div>
<div style="position:absolute;left:1962px;top:336px;width:15px;height:4px;background:#e53e27"></div>
<div style="position:absolute;left:1989px;top:336px;width:15px;height:4px;background:#e53e27"></div>
<div style="position:absolute;left:2016px;top:336px;width:15px;height:4px;background:#e53e27"></div>
<div style="position:absolute;left:2043px;top:336px;width:15px;height:4px;background:#e53e27"></div>
<div style="position:absolute;left:2070px;top:336px;width:15px;height:4px;background:#e53e27"></div>
<div style="position:absolute;left:2097px;top:336px;width:15px;height:4px;background:#e53e27"></div>
<div style="position:absolute;left:2124px;top:336px;width:15px;height:4px;background:#e53e27"></div>
<div style="position:absolute;left:2151px;top:336px;width:15px;height:4px;background:#e53e27"></div>
<div style="position:absolute;left:1763px;top:342px;width:4px;height:15px;background:#e53e27"></div>
<div style="position:absolute;left:1763px;top:369px;width:4px;height:15px;background:#e53e27"></div>
<div style="position:absolute;left:1763px;top:396px;width:4px;height:15px;background:#e53e27"></div>
<div style="position:absolute;left:1763px;top:423px;width:4px;height:15px;background:#e53e27"></div>
<div style="position:absolute;left:1763px;top:450px;width:4px;height:15px;background:#e53e27"></div>
<div style="position:absolute;left:1763px;top:477px;width:4px;height:15px;background:#e53e27"></div>
<div style="position:absolute;left:1763px;top:504px;width:4px;height:15px;background:#e53e27"></div>
<div style="position:absolute;left:1763px;top:531px;width:4px;height:15px;background:#e53e27"></div>
<div style="position:absolute;left:1763px;top:558px;width:4px;height:15px;background:#e53e27"></div>
<div style="position:absolute;left:1763px;top:585px;width:4px;height:15px;background:#e53e27"></div>
<div style="position:absolute;left:1763px;top:612px;width:4px;height:15px;background:#e53e27"></div>
<div style="position:absolute;left:1763px;top:639px;width:4px;height:15px;background:#e53e27"></div>
<div style="position:absolute;left:1763px;top:666px;width:4px;height:15px;background:#e53e27"></div>
<div style="position:absolute;left:1763px;top:693px;width:4px;height:15px;background:#e53e27"></div>
<div style="position:absolute;left:1763px;top:720px;width:4px;height:15px;background:#e53e27"></div>
<div style="position:absolute;left:1763px;top:747px;width:4px;height:15px;background:#e53e27"></div>
<div style="position:absolute;left:1763px;top:774px;width:4px;height:15px;background:#e53e27"></div>
<div style="position:absolute;left:1763px;top:801px;width:4px;height:15px;background:#e53e27"></div>
<div style="position:absolute;left:2177px;top:796px;width:4px;height:15px;background:#e53e27"></div>
<div style="position:absolute;left:2177px;top:769px;width:4px;height:15px;background:#e53e27"></div>
<div style="position:absolute;left:2177px;top:742px;width:4px;height:15px;background:#e53e27"></div>
<div style="position:absolute;left:2177px;top:715px;width:4px;height:15px;background:#e53e27"></div>
<div style="position:absolute;left:2177px;top:688px;width:4px;height:15px;background:#e53e27"></div>
<div style="position:absolute;left:2177px;top:661px;width:4px;height:15px;background:#e53e27"></div>
<div style="position:absolute;left:2177px;top:634px;width:4px;height:15px;background:#e53e27"></div>
<div style="position:absolute;left:2177px;top:607px;width:4px;height:15px;background:#e53e27"></div>
<div style="position:absolute;left:2177px;top:580px;width:4px;height:15px;background:#e53e27"></div>
<div style="position:absolute;left:2177px;top:553px;width:4px;height:15px;background:#e53e27"></div>
<div style="position:absolute;left:2177px;top:526px;width:4px;height:15px;background:#e53e27"></div>
<div style="position:absolute;left:2177px;top:499px;width:4px;height:15px;background:#e53e27"></div>
<div style="position:absolute;left:2177px;top:472px;width:4px;height:15px;background:#e53e27"></div>
<div style="position:absolute;left:2177px;top:445px;width:4px;height:15px;background:#e53e27"></div>
<div style="position:absolute;left:2177px;top:418px;width:4px;height:15px;background:#e53e27"></div>
<div style="position:absolute;left:2177px;top:391px;width:4px;height:15px;background:#e53e27"></div>
<div style="position:absolute;left:2177px;top:364px;width:4px;height:15px;background:#e53e27"></div>
<div style="position:absolute;left:2177px;top:337px;width:4px;height:15px;background:#e53e27"></div>
<div style="position:absolute;left:2167px;top:824px;width:14px;height:4px;background:#e53e27"></div>
<div style="position:absolute;left:2140px;top:824px;width:15px;height:4px;background:#e53e27"></div>
<div style="position:absolute;left:2113px;top:824px;width:15px;height:4px;background:#e53e27"></div>
<div style="position:absolute;left:2086px;top:824px;width:15px;height:4px;background:#e53e27"></div>
<div style="position:absolute;left:2059px;top:824px;width:15px;height:4px;background:#e53e27"></div>
<div style="position:absolute;left:2032px;top:824px;width:15px;height:4px;background:#e53e27"></div>
<div style="position:absolute;left:2005px;top:824px;width:15px;height:4px;background:#e53e27"></div>
<div style="position:absolute;left:1978px;top:824px;width:15px;height:4px;background:#e53e27"></div>
<div style="position:absolute;left:1951px;top:824px;width:15px;height:4px;background:#e53e27"></div>
<div style="position:absolute;left:1924px;top:824px;width:15px;height:4px;background:#e53e27"></div>
<div style="position:absolute;left:1897px;top:824px;width:15px;height:4px;background:#e53e27"></div>
<div style="position:absolute;left:1870px;top:824px;width:15px;height:4px;background:#e53e27"></div>
<div style="position:absolute;left:1843px;top:824px;width:15px;height:4px;background:#e53e27"></div>
<div style="position:absolute;left:1816px;top:824px;width:15px;height:4px;background:#e53e27"></div>
<div style="position:absolute;left:1789px;top:824px;width:15px;height:4px;background:#e53e27"></div>
<div style="position:absolute;left:1763px;top:824px;width:14px;height:4px;background:#e53e27"></div>
<div style="position:absolute;left:2177px;top:822px;width:4px;height:6px;background:#e53e27"></div>
<div class="t" style="left:1786.3px;top:868.4px;font-size:21.62px;line-height:21.62px;letter-spacing:0.00px;color:#6f6f6f;transform:scaleX(0.9285);transform-origin:0 0;">BILLABLE TOTAL</div>
<div class="t" style="left:1787.4px;top:916.3px;font-size:33.51px;line-height:33.51px;letter-spacing:0.99px;color:#52b4df;font-weight:700;transform:scaleX(1.0490);transform-origin:0 0;">$5,496</div>
<div class="t" style="left:1779.2px;top:1001.4px;font-size:29.73px;line-height:29.73px;letter-spacing:0.08px;color:#2b2a33;font-weight:700;transform:scaleX(1.0052);transform-origin:0 0;">Device Labels</div>
<svg style="position:absolute;left:1994px;top:1000px;" width="36" height="36" viewBox="0 0 36 36" fill="none"><rect x="2" y="2" width="31" height="31" rx="7" stroke="#b8b8b8" stroke-width="2"/><path d="M13.5 13 C13.5 10.5 15.5 9 17.5 9 C20 9 21.7 10.7 21.7 13 C21.7 15.5 18 16.2 18 19.5" stroke="#b8b8b8" stroke-width="2" stroke-linecap="round"/><circle cx="18" cy="24.5" r="1.3" fill="#b8b8b8"/></svg>
<div style="position:absolute;left:1780px;top:1066px;width:400px;height:107px;border-radius:24px;background:#f6f6f6"></div>
<div style="position:absolute;left:1802px;top:1087px;width:356px;height:65px;border-radius:18px;background:#e7dff0"></div>
<svg style="position:absolute;left:1862px;top:1104px;" width="30" height="30" viewBox="0 0 30 30" fill="none"><rect x="2" y="2" width="25" height="25" rx="6" stroke="#773795" stroke-width="2"/><path d="M14.5 9 V20 M9 14.5 H20" stroke="#773795" stroke-width="2" stroke-linecap="round"/></svg>
<div class="t" style="left:1905.1px;top:1109.7px;font-size:19.73px;line-height:19.73px;letter-spacing:0.19px;color:#773795;transform:scaleX(1.1320);transform-origin:0 0;">drop files to upload</div>
<div style="position:absolute;left:1770px;top:1195px;width:420px;height:78px;overflow:hidden">
<div style="position:absolute;left:10px;top:6px;width:185px;height:120px;border-radius:22px;background:#f7f7f7"></div>
<div style="position:absolute;left:32.700000000000045px;top:6px;width:139px;height:120px;background:#fff;overflow:hidden">
<svg width="139" height="80" style="position:absolute;left:0;top:1px" fill="none"><path d="M4.8 4.4 H28.8" stroke="#555" stroke-width="1.1"/><path d="M4.8 6.5 H25.8" stroke="#555" stroke-width="0.8"/><path d="M4.8 8.6 H27.8" stroke="#555" stroke-width="0.8"/><path d="M4.8 10.7 H19.8" stroke="#555" stroke-width="0.8"/><path d="M4.8 12.8 H18.8" stroke="#555" stroke-width="0.8"/><path d="M4.8 14.9 H26.8" stroke="#555" stroke-width="0.8"/><path d="M41 8.5 C43 5 47 5 49 8.5 C47 11 43 11 41 8.5Z" fill="#333"/><text x="50" y="11.4" font-size="6.6" font-family="Liberation Sans" fill="#555" textLength="29" lengthAdjust="spacingAndGlyphs">INTEGRITY</text><text x="79" y="11.4" font-size="6.6" font-weight="bold" font-family="Liberation Sans" fill="#222" textLength="20" lengthAdjust="spacingAndGlyphs">IMPLANTS</text><text x="110.6" y="8" font-size="4" font-weight="bold" font-family="Liberation Sans" fill="#222" textLength="22.7" lengthAdjust="spacingAndGlyphs">ORDER FORM</text><path d="M110.6 10.5 H133" stroke="#666" stroke-width="0.9"/><path d="M110.6 12.8 H133" stroke="#666" stroke-width="0.9"/><path d="M110.6 15.1 H133" stroke="#666" stroke-width="0.9"/><path d="M41 16.6 H80" stroke="#666" stroke-width="0.8"/><rect x="4.8" y="18.4" width="62.5" height="17.9" stroke="#333" stroke-width="0.7"/><rect x="71.2" y="18.4" width="62.5" height="17.9" stroke="#333" stroke-width="0.7"/><rect x="4.8" y="18.4" width="3.9" height="17.9" fill="#222"/><rect x="71.2" y="18.4" width="4" height="17.9" fill="#222"/><path d="M8.7 24.9 H67.3 M8.7 30.6 H67.3 M75.2 24.9 H133.7 M75.2 30.6 H133.7" stroke="#555" stroke-width="0.6"/><path d="M10 19.8 H22 M76 19.8 H92" stroke="#666" stroke-width="0.8"/><path d="M10 25.8 H22 M76 25.8 H92" stroke="#666" stroke-width="0.8"/><path d="M10 31.6 H22 M76 31.6 H92" stroke="#666" stroke-width="0.8"/><path d="M12.0 22.7 L13.4 23.3 L14.7 23.1 L16.3 22.2 L18.1 22.2 L19.8 22.2 L21.1 22.9 L23.3 22.3 L24.8 23.2 L27.1 23.1 L28.8 23.9 L30.1 23.6 L31.6 22.4 L33.0 22.7" stroke="#444" stroke-width="0.7"/><path d="M18.0 27.9 L19.9 28.8 L21.5 28.6 L22.8 27.7 L24.3 28.8 L26.0 28.2 L27.9 28.4 L29.4 29.0 L31.5 28.0" stroke="#444" stroke-width="0.7"/><path d="M14.0 34.2 L16.3 34.6 L17.8 35.1 L19.1 34.1 L21.2 33.6 L23.0 33.4 L25.0 34.7 L26.9 34.9 L28.5 34.6 L30.4 34.3 L32.2 34.8" stroke="#444" stroke-width="0.7"/><path d="M80.0 23.0 L82.0 22.2 L84.0 23.3 L86.4 23.6 L88.0 22.8 L90.0 22.1 L91.7 22.4 L93.1 22.2 L95.2 22.3 L96.7 22.8 L98.9 22.2 L100.7 23.1 L102.9 23.6 L105.2 22.6 L106.9 22.7 L109.1 23.8 L110.5 22.4 L112.0 22.5 L113.8 23.2 L115.3 22.1 L117.0 22.8 L118.9 23.8 L120.9 23.0 L122.8 23.3 L124.1 23.7" stroke="#444" stroke-width="0.7"/><path d="M85.0 29.2 L87.2 28.3 L88.8 27.8 L90.8 27.7 L92.1 28.0 L93.5 28.2 L94.7 27.6 L96.1 27.8 L97.8 27.6 L100.0 28.7 L101.4 28.1 L103.0 28.3 L104.3 29.1 L106.7 28.4 L108.5 27.8 L109.8 28.2" stroke="#444" stroke-width="0.7"/><path d="M80.0 34.8 L81.4 33.3 L83.7 34.3 L85.1 34.3 L86.3 34.3 L88.7 34.9 L90.8 33.8 L92.4 33.6 L94.5 34.3 L96.7 33.9 L98.1 34.8 L100.5 34.8 L102.7 34.8 L104.8 33.7 L106.6 33.9 L107.8 33.4 L109.4 33.8 L111.4 35.0 L113.1 35.0 L115.5 35.0 L117.1 33.7 L118.6 33.7" stroke="#444" stroke-width="0.7"/><rect x="4.8" y="37.2" width="128.9" height="18.6" stroke="#333" stroke-width="0.7"/><rect x="4.8" y="37.2" width="3.9" height="18.6" fill="#222"/><path d="M26.2 37.2 V55.8 M57.3 37.2 V55.8 M87.8 37.2 V55.8" stroke="#444" stroke-width="0.6"/><path d="M10 39.3 H16 M17.5 39.3 H24" stroke="#777" stroke-width="0.6"/><path d="M10 42 H16 M17.5 42 H24" stroke="#777" stroke-width="0.6"/><path d="M10 44.7 H16 M17.5 44.7 H24" stroke="#777" stroke-width="0.6"/><path d="M10 47.4 H16 M17.5 47.4 H24" stroke="#777" stroke-width="0.6"/><path d="M10 50.1 H16 M17.5 50.1 H24" stroke="#777" stroke-width="0.6"/><path d="M10 52.8 H16 M17.5 52.8 H24" stroke="#777" stroke-width="0.6"/><path d="M28 39.5 H45 M28 46.5 H45 M59 39.5 H78 M59 42 H72 M90.5 39.5 H120 M90.5 42 H115 M90.5 44.5 H118 M90.5 47 H110 M90.5 49 H100" stroke="#777" stroke-width="0.8"/><path d="M26.2 45 H57.3" stroke="#555" stroke-width="0.5"/><path d="M32.0 43.2 L34.3 43.6 L36.1 43.3 L38.2 42.3 L40.2 43.7 L42.3 43.5 L44.1 42.4 L46.3 42.7 L48.4 43.8" stroke="#444" stroke-width="0.7"/><path d="M30.0 52.3 L32.3 52.9 L33.7 51.8 L35.1 53.2 L37.3 51.9 L39.5 53.4 L41.5 52.2 L43.3 51.8 L44.5 53.3 L46.5 52.5 L48.8 52.4 L51.1 53.1 L52.5 52.1" stroke="#444" stroke-width="0.7"/><path d="M90.5 52.6 H120.6" stroke="#111" stroke-width="3" stroke-dasharray="0.9 0.6 0.5 0.5 1.2 0.5"/><path d="M4.8 58.3 H99" stroke="#999" stroke-width="0.7" stroke-dasharray="2 0.7"/><rect x="4.8" y="60.8" width="129.2" height="14" stroke="#444" stroke-width="0.7"/><path d="M4.8 67.3 H134 M9.2 60.8 V75 M17 60.8 V75 M40 60.8 V75 M63 60.8 V75 M103 60.8 V75 M118.6 60.8 V75" stroke="#555" stroke-width="0.6"/><path d="M19 64 H38 M42 64 H55 M65 64 H85 M105 64 H116 M120 63 H132 M120 65 H128 M19 70.5 H38 M65 70.5 H90 M106 70.5 H115 M121 70.5 H131" stroke="#666" stroke-width="1"/></svg>
</div>
<div style="position:absolute;left:217px;top:6px;width:185px;height:120px;border-radius:22px;background:#f7f7f7"></div>
<div style="position:absolute;left:239.5px;top:6px;width:139px;height:120px;background:#fff;overflow:hidden">
<svg width="139" height="80" style="position:absolute;left:0;top:1px" fill="none"><path d="M4.8 4.4 H28.8" stroke="#555" stroke-width="1.1"/><path d="M4.8 6.5 H25.8" stroke="#555" stroke-width="0.8"/><path d="M4.8 8.6 H27.8" stroke="#555" stroke-width="0.8"/><path d="M4.8 10.7 H19.8" stroke="#555" stroke-width="0.8"/><path d="M4.8 12.8 H18.8" stroke="#555" stroke-width="0.8"/><path d="M4.8 14.9 H26.8" stroke="#555" stroke-width="0.8"/><path d="M41 8.5 C43 5 47 5 49 8.5 C47 11 43 11 41 8.5Z" fill="#333"/><text x="50" y="11.4" font-size="6.6" font-family="Liberation Sans" fill="#555" textLength="29" lengthAdjust="spacingAndGlyphs">INTEGRITY</text><text x="79" y="11.4" font-size="6.6" font-weight="bold" font-family="Liberation Sans" fill="#222" textLength="20" lengthAdjust="spacingAndGlyphs">IMPLANTS</text><text x="110.6" y="8" font-size="4" font-weight="bold" font-family="Liberation Sans" fill="#222" textLength="22.7" lengthAdjust="spacingAndGlyphs">ORDER FORM</text><path d="M110.6 10.5 H133" stroke="#666" stroke-width="0.9"/><path d="M110.6 12.8 H133" stroke="#666" stroke-width="0.9"/><path d="M110.6 15.1 H133" stroke="#666" stroke-width="0.9"/><path d="M41 16.6 H80" stroke="#666" stroke-width="0.8"/><rect x="4.8" y="18.4" width="62.5" height="17.9" stroke="#333" stroke-width="0.7"/><rect x="71.2" y="18.4" width="62.5" height="17.9" stroke="#333" stroke-width="0.7"/><rect x="4.8" y="18.4" width="3.9" height="17.9" fill="#222"/><rect x="71.2" y="18.4" width="4" height="17.9" fill="#222"/><path d="M8.7 24.9 H67.3 M8.7 30.6 H67.3 M75.2 24.9 H133.7 M75.2 30.6 H133.7" stroke="#555" stroke-width="0.6"/><path d="M10 19.8 H22 M76 19.8 H92" stroke="#666" stroke-width="0.8"/><path d="M10 25.8 H22 M76 25.8 H92" stroke="#666" stroke-width="0.8"/><path d="M10 31.6 H22 M76 31.6 H92" stroke="#666" stroke-width="0.8"/><path d="M12.0 22.7 L13.4 23.3 L14.7 23.1 L16.3 22.2 L18.1 22.2 L19.8 22.2 L21.1 22.9 L23.3 22.3 L24.8 23.2 L27.1 23.1 L28.8 23.9 L30.1 23.6 L31.6 22.4 L33.0 22.7" stroke="#444" stroke-width="0.7"/><path d="M18.0 27.9 L19.9 28.8 L21.5 28.6 L22.8 27.7 L24.3 28.8 L26.0 28.2 L27.9 28.4 L29.4 29.0 L31.5 28.0" stroke="#444" stroke-width="0.7"/><path d="M14.0 34.2 L16.3 34.6 L17.8 35.1 L19.1 34.1 L21.2 33.6 L23.0 33.4 L25.0 34.7 L26.9 34.9 L28.5 34.6 L30.4 34.3 L32.2 34.8" stroke="#444" stroke-width="0.7"/><path d="M80.0 23.0 L82.0 22.2 L84.0 23.3 L86.4 23.6 L88.0 22.8 L90.0 22.1 L91.7 22.4 L93.1 22.2 L95.2 22.3 L96.7 22.8 L98.9 22.2 L100.7 23.1 L102.9 23.6 L105.2 22.6 L106.9 22.7 L109.1 23.8 L110.5 22.4 L112.0 22.5 L113.8 23.2 L115.3 22.1 L117.0 22.8 L118.9 23.8 L120.9 23.0 L122.8 23.3 L124.1 23.7" stroke="#444" stroke-width="0.7"/><path d="M85.0 29.2 L87.2 28.3 L88.8 27.8 L90.8 27.7 L92.1 28.0 L93.5 28.2 L94.7 27.6 L96.1 27.8 L97.8 27.6 L100.0 28.7 L101.4 28.1 L103.0 28.3 L104.3 29.1 L106.7 28.4 L108.5 27.8 L109.8 28.2" stroke="#444" stroke-width="0.7"/><path d="M80.0 34.8 L81.4 33.3 L83.7 34.3 L85.1 34.3 L86.3 34.3 L88.7 34.9 L90.8 33.8 L92.4 33.6 L94.5 34.3 L96.7 33.9 L98.1 34.8 L100.5 34.8 L102.7 34.8 L104.8 33.7 L106.6 33.9 L107.8 33.4 L109.4 33.8 L111.4 35.0 L113.1 35.0 L115.5 35.0 L117.1 33.7 L118.6 33.7" stroke="#444" stroke-width="0.7"/><rect x="4.8" y="37.2" width="128.9" height="18.6" stroke="#333" stroke-width="0.7"/><rect x="4.8" y="37.2" width="3.9" height="18.6" fill="#222"/><path d="M26.2 37.2 V55.8 M57.3 37.2 V55.8 M87.8 37.2 V55.8" stroke="#444" stroke-width="0.6"/><path d="M10 39.3 H16 M17.5 39.3 H24" stroke="#777" stroke-width="0.6"/><path d="M10 42 H16 M17.5 42 H24" stroke="#777" stroke-width="0.6"/><path d="M10 44.7 H16 M17.5 44.7 H24" stroke="#777" stroke-width="0.6"/><path d="M10 47.4 H16 M17.5 47.4 H24" stroke="#777" stroke-width="0.6"/><path d="M10 50.1 H16 M17.5 50.1 H24" stroke="#777" stroke-width="0.6"/><path d="M10 52.8 H16 M17.5 52.8 H24" stroke="#777" stroke-width="0.6"/><path d="M28 39.5 H45 M28 46.5 H45 M59 39.5 H78 M59 42 H72 M90.5 39.5 H120 M90.5 42 H115 M90.5 44.5 H118 M90.5 47 H110 M90.5 49 H100" stroke="#777" stroke-width="0.8"/><path d="M26.2 45 H57.3" stroke="#555" stroke-width="0.5"/><path d="M32.0 43.2 L34.3 43.6 L36.1 43.3 L38.2 42.3 L40.2 43.7 L42.3 43.5 L44.1 42.4 L46.3 42.7 L48.4 43.8" stroke="#444" stroke-width="0.7"/><path d="M30.0 52.3 L32.3 52.9 L33.7 51.8 L35.1 53.2 L37.3 51.9 L39.5 53.4 L41.5 52.2 L43.3 51.8 L44.5 53.3 L46.5 52.5 L48.8 52.4 L51.1 53.1 L52.5 52.1" stroke="#444" stroke-width="0.7"/><path d="M90.5 52.6 H120.6" stroke="#111" stroke-width="3" stroke-dasharray="0.9 0.6 0.5 0.5 1.2 0.5"/><path d="M4.8 58.3 H99" stroke="#999" stroke-width="0.7" stroke-dasharray="2 0.7"/><rect x="4.8" y="60.8" width="129.2" height="14" stroke="#444" stroke-width="0.7"/><path d="M4.8 67.3 H134 M9.2 60.8 V75 M17 60.8 V75 M40 60.8 V75 M63 60.8 V75 M103 60.8 V75 M118.6 60.8 V75" stroke="#555" stroke-width="0.6"/><path d="M19 64 H38 M42 64 H55 M65 64 H85 M105 64 H116 M120 63 H132 M120 65 H128 M19 70.5 H38 M65 70.5 H90 M106 70.5 H115 M121 70.5 H131" stroke="#666" stroke-width="1"/></svg>
</div>
</div>
<div style="position:absolute;left:1557px;top:1351px;width:630px;height:80px;border-radius:28px;background:#fff;box-shadow:0 0 18px rgba(0,0,0,0.06)"></div>
<div class="t" style="left:1584.1px;top:1365.0px;font-size:27.97px;line-height:27.97px;letter-spacing:1.11px;color:#2b2a33;font-weight:700;transform:scaleX(1.0632);transform-origin:0 0;">Messaging</div>
<svg style="position:absolute;left:2124px;top:1368px;" width="24" height="18" viewBox="0 0 24 18" fill="none"><path d="M4 14 L12 6 L20 14" stroke="#b3b3b3" stroke-width="2.4" stroke-linecap="round" stroke-linejoin="round"/></svg>
<div style="position:absolute;left:2201px;top:1348px;width:110px;height:80px;border-radius:28px;background:#fff;box-shadow:0 0 18px rgba(0,0,0,0.06)"></div>
<svg style="position:absolute;left:2215px;top:1352px;" width="60" height="46" viewBox="0 0 60 46" fill="none"><path d="M20 5.5 Q21.87 12.129999999999999 28.5 14 Q21.87 15.870000000000001 20 22.5 Q18.13 15.870000000000001 11.5 14 Q18.13 12.129999999999999 20 5.5 Z" fill="#6ec2e8"/><path d="M36 13 Q39.08 23.92 50 27 Q39.08 30.08 36 41 Q32.92 30.08 22 27 Q32.92 23.92 36 13 Z" fill="#5a2273"/><path d="M16 25 Q17.98 32.02 25 34 Q17.98 35.98 16 43 Q14.02 35.98 7 34 Q14.02 32.02 16 25 Z" fill="#48474c"/></svg>
</div>
</body></html>
